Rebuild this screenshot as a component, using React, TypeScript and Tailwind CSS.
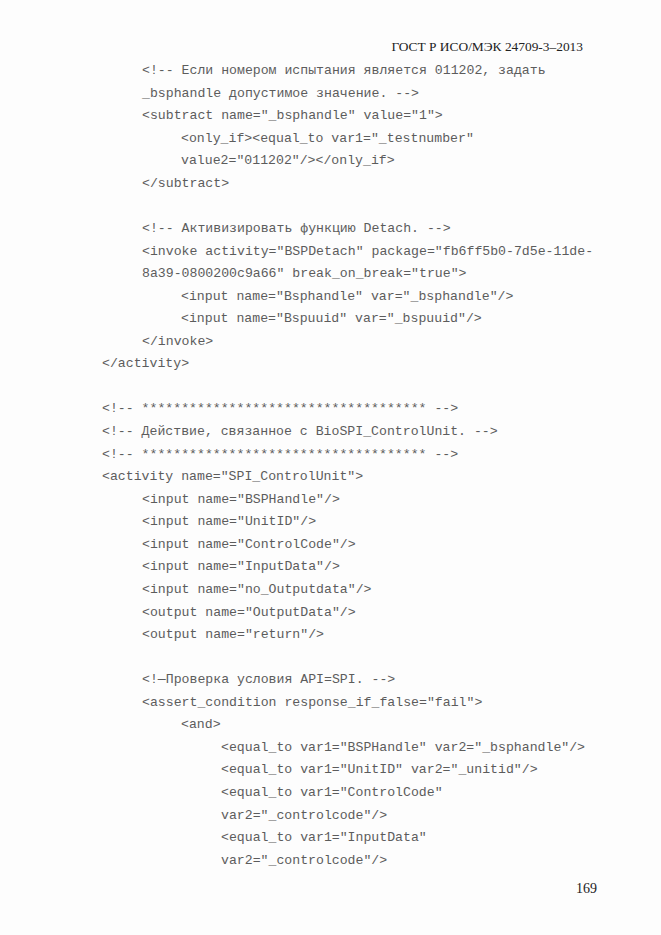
import React from 'react';

type Line = { text: string; level: number };

const STARS = '<!-- ' + '*'.repeat(36) + ' -->';

const lines: Line[] = [
  { text: '<!-- Если номером испытания является 011202, задать', level: 1 },
  { text: '_bsphandle допустимое значение. -->', level: 1 },
  { text: '<subtract name="_bsphandle" value="1">', level: 1 },
  { text: '<only_if><equal_to var1="_testnumber"', level: 2 },
  { text: 'value2="011202"/></only_if>', level: 2 },
  { text: '</subtract>', level: 1 },
  { text: '', level: 0 },
  { text: '<!-- Активизировать функцию Detach. -->', level: 1 },
  { text: '<invoke activity="BSPDetach" package="fb6ff5b0-7d5e-11de-', level: 1 },
  { text: '8a39-0800200c9a66" break_on_break="true">', level: 1 },
  { text: '<input name="Bsphandle" var="_bsphandle"/>', level: 2 },
  { text: '<input name="Bspuuid" var="_bspuuid"/>', level: 2 },
  { text: '</invoke>', level: 1 },
  { text: '</activity>', level: 0 },
  { text: '', level: 0 },
  { text: STARS, level: 0 },
  { text: '<!-- Действие, связанное с BioSPI_ControlUnit. -->', level: 0 },
  { text: STARS, level: 0 },
  { text: '<activity name="SPI_ControlUnit">', level: 0 },
  { text: '<input name="BSPHandle"/>', level: 1 },
  { text: '<input name="UnitID"/>', level: 1 },
  { text: '<input name="ControlCode"/>', level: 1 },
  { text: '<input name="InputData"/>', level: 1 },
  { text: '<input name="no_Outputdata"/>', level: 1 },
  { text: '<output name="OutputData"/>', level: 1 },
  { text: '<output name="return"/>', level: 1 },
  { text: '', level: 0 },
  { text: '<!—Проверка условия API=SPI. -->', level: 1 },
  { text: '<assert_condition response_if_false="fail">', level: 1 },
  { text: '<and>', level: 2 },
  { text: '<equal_to var1="BSPHandle" var2="_bsphandle"/>', level: 3 },
  { text: '<equal_to var1="UnitID" var2="_unitid"/>', level: 3 },
  { text: '<equal_to var1="ControlCode"', level: 3 },
  { text: 'var2="_controlcode"/>', level: 3 },
  { text: '<equal_to var1="InputData"', level: 3 },
  { text: 'var2="_controlcode"/>', level: 3 },
];

const indent = ['pl-0', 'pl-[40px]', 'pl-[79px]', 'pl-[119px]'];

export default function App() {
  return (
    <div className="w-[661px] h-[935px] bg-[#fdfdfd] overflow-hidden">
      {/* Header */}
      <div className="flex justify-end pt-[38px] pr-[78px]">
        <span className="text-[13.4px] leading-[18px] text-[#222] font-['Liberation_Serif',serif]">
          ГОСТ Р ИСО/МЭК 24709-3–2013
        </span>
      </div>

      {/* Code listing */}
      <div className="mt-[4px] pl-[102px] font-['Liberation_Mono',monospace] text-[13.2px] leading-[22.57px] text-[#5c5c5c]">
        {lines.map((l, i) => (
          <div key={i} className={`h-[22.57px] whitespace-pre ${indent[l.level]}`}>
            {l.text}
          </div>
        ))}
      </div>

      {/* Page number */}
      <div className="flex justify-end mt-[8px] pr-[64px]">
        <span className="text-[14px] leading-[18px] text-[#222] font-['Liberation_Serif',serif]">169</span>
      </div>
    </div>
  );
}
